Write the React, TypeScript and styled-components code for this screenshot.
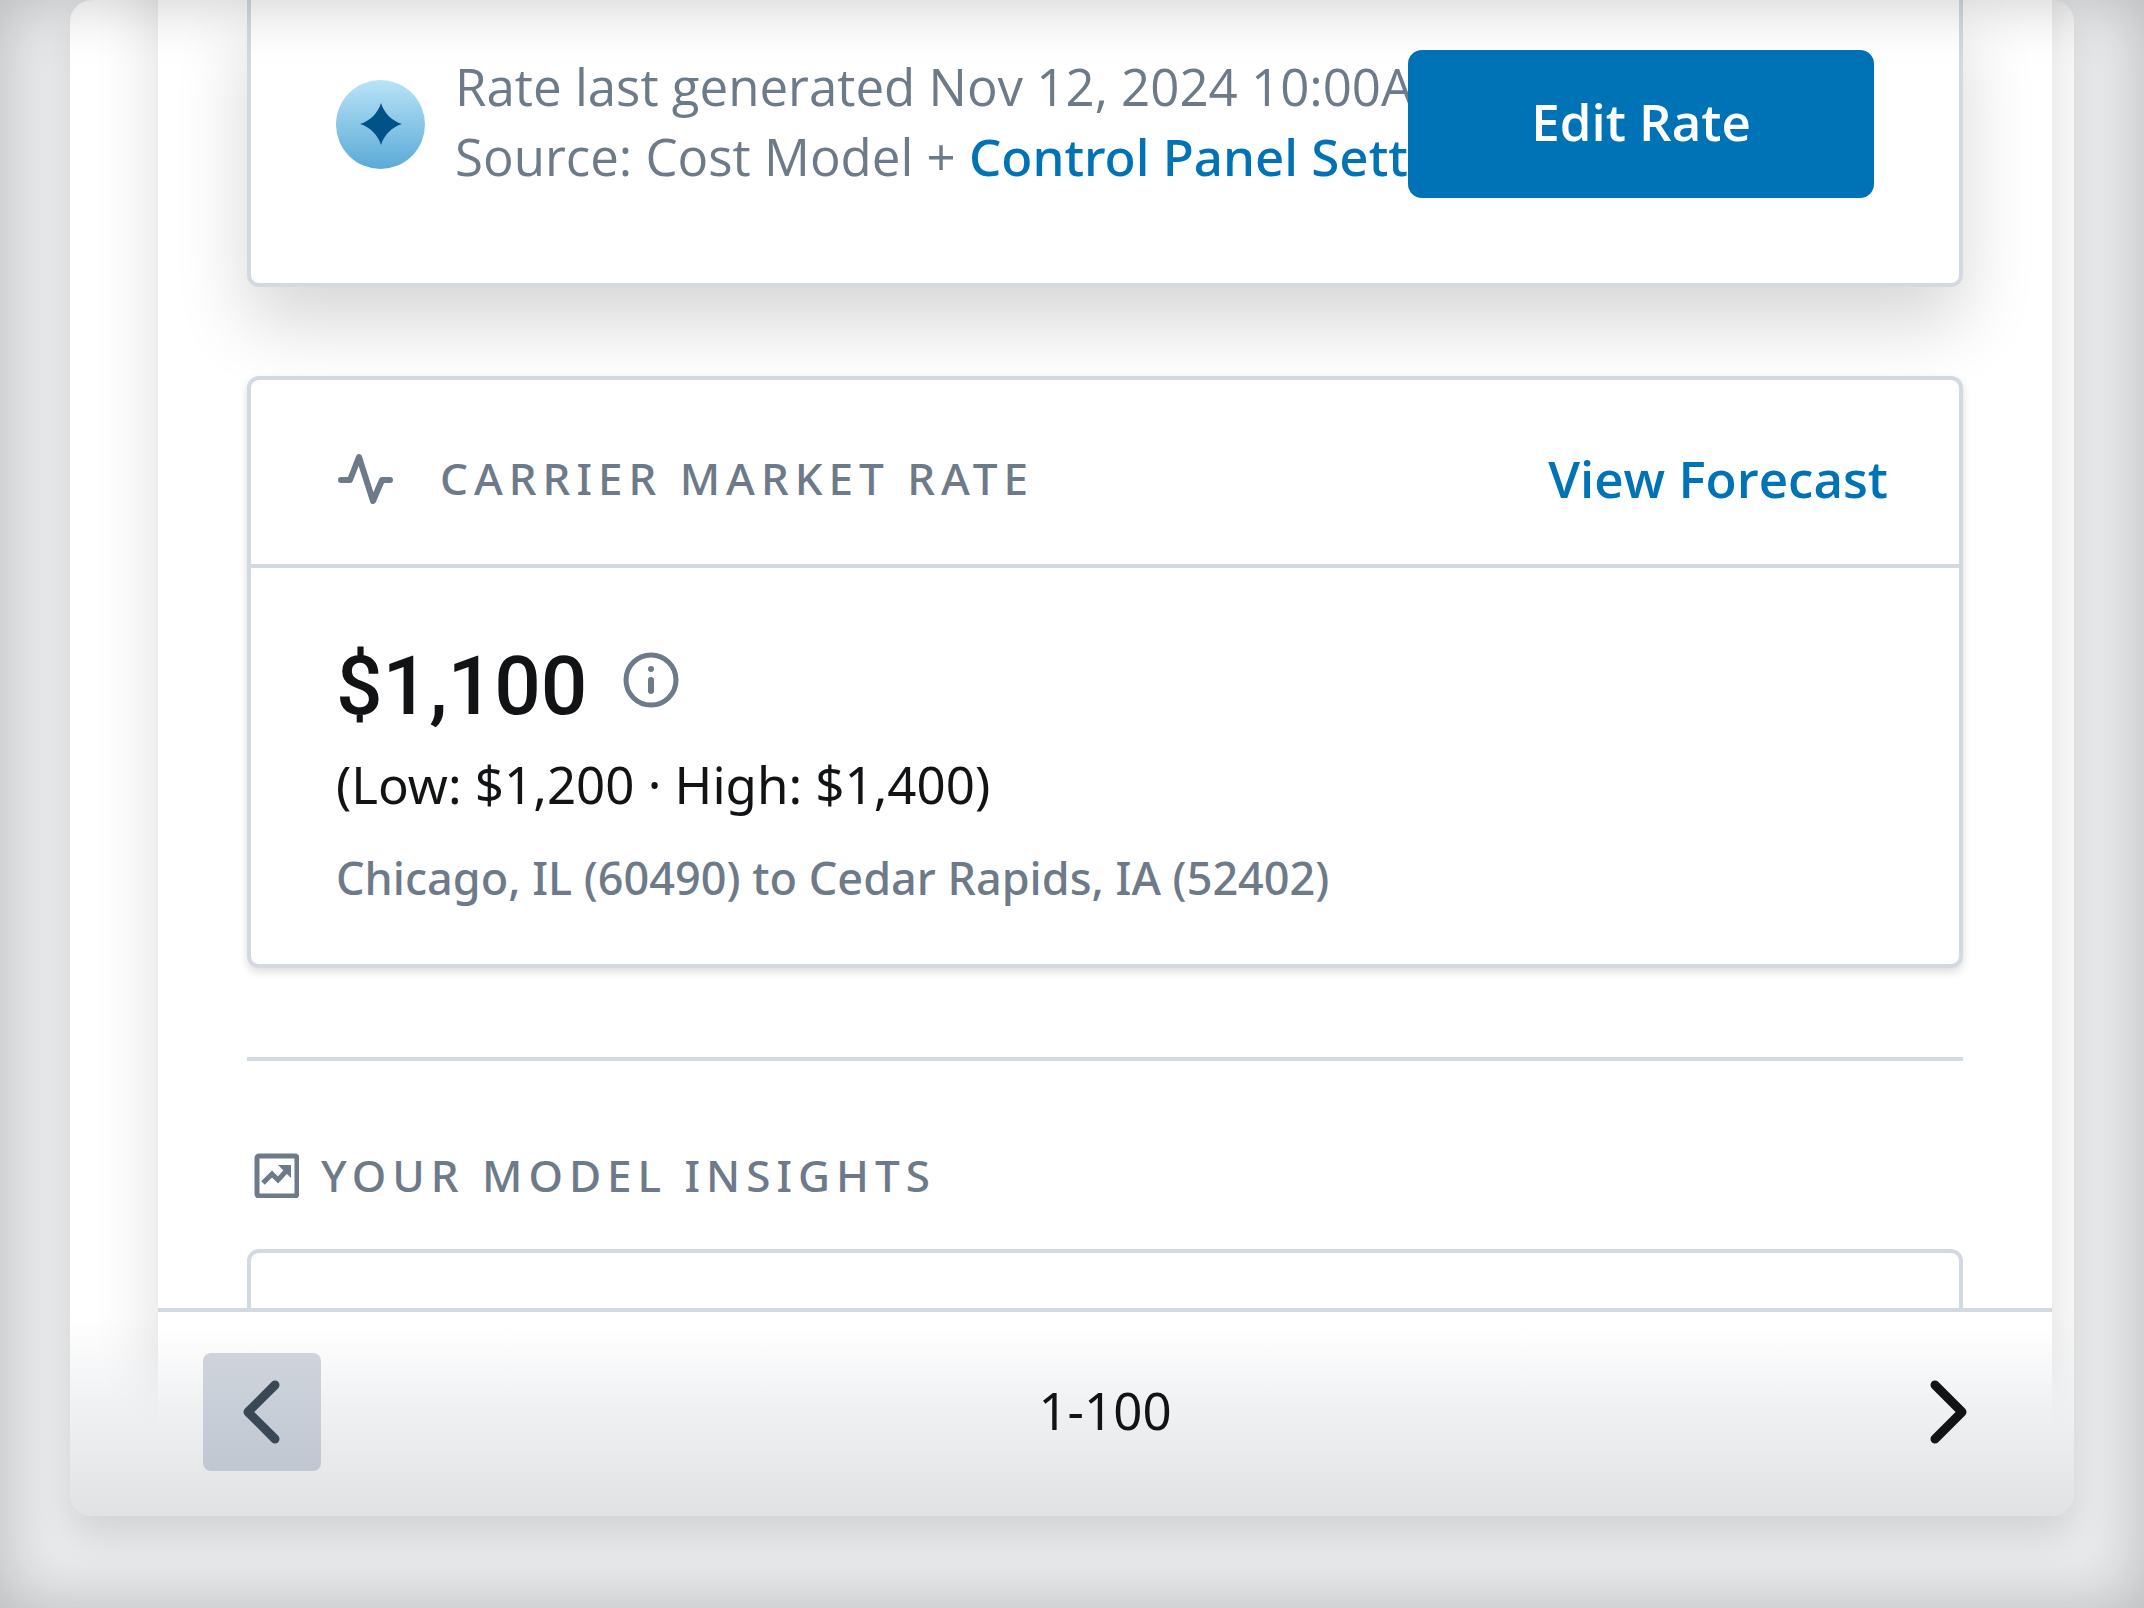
import React from "react";
import styled, { createGlobalStyle } from "styled-components";

const color = {
  line: "#d3d9e1",
  muted: "#6c7a89",
  ink: "#111315",
  blue: "#0072b6",
};

const GlobalStyle = createGlobalStyle`
  * { box-sizing: border-box; }
  body {
    margin: 0;
    font-family: "Open Sans", "Noto Sans", sans-serif;
    color: ${color.ink};
    background: #e9ebed;
  }
  h2, p { margin: 0; }
`;

const Page = styled.div`
  position: relative;
  display: flex;
  height: 100vh;
  padding: 0 70px 92px;
  background: #e9ebed;

  &::after {
    content: "";
    position: absolute;
    inset: 0;
    box-shadow: inset 0 0 64px rgba(0, 0, 0, 0.22);
    pointer-events: none;
  }
`;

const Window = styled.div`
  display: flex;
  flex: 1;
  min-width: 0;
  padding: 0 22px 0 88px;
  overflow: hidden;
  border-radius: 22px;
  background: linear-gradient(to top, #e1e2e4, #f0f1f3 110px, #fff 200px);
`;

const WindowShadow = styled.div`
  display: flex;
  flex: 1;
  min-width: 0;
  border-radius: 22px;
  box-shadow: 0 20px 36px rgba(0, 0, 0, 0.1);
`;

const Panel = styled.main`
  display: flex;
  flex: 1;
  flex-direction: column;
  min-width: 0;
  box-shadow: 0 -140px 60px rgba(0, 0, 0, 0.14);
`;

const Scroll = styled.div`
  flex: 1;
  min-height: 0;
  padding: 0 89px;
  overflow: hidden;
  background: #fff;
`;

const RateCard = styled.section`
  display: flex;
  align-items: center;
  padding: 50px 85px 85px;
  border: 4px solid ${color.line};
  border-top: 0;
  border-radius: 0 0 12px 12px;
  background: #fff;
  box-shadow: 0 36px 72px rgba(0, 0, 0, 0.16);
`;

const SparkBadge = styled.span`
  display: flex;
  flex: none;
  align-items: center;
  justify-content: center;
  width: 89px;
  height: 89px;
  margin-right: 30px;
  border-radius: 50%;
  background: linear-gradient(#b9e3f8, #5aaad6);
`;

const RateNote = styled.p`
  flex: 1;
  width: 0;
  padding-bottom: 6px;
  color: ${color.muted};
  font-size: 51px;
  line-height: 70px;
  white-space: nowrap;
`;

const TextLink = styled.a<{ $strong?: boolean }>`
  color: ${color.blue};
  font-family: ${(p) => (p.$strong ? '"Open Sans"' : '"Noto Sans"')}, sans-serif;
  font-size: 51px;
  font-weight: ${(p) => (p.$strong ? 600 : 500)};
  line-height: 70px;
  text-decoration: none;
`;

const EditButton = styled.button`
  position: relative;
  flex: none;
  width: 466px;
  height: 148px;
  padding: 0 0 6px;
  border: 0;
  border-radius: 14px;
  background: ${color.blue};
  color: #fff;
  font: 600 51px/70px "Open Sans", "Noto Sans", sans-serif;
`;

const MarketCard = styled.section`
  margin-top: 89px;
  border: 4px solid ${color.line};
  border-radius: 12px;
  background: #fff;
  box-shadow: 0 4px 8px rgba(30, 10, 10, 0.14);
`;

const MarketHeader = styled.header`
  display: flex;
  align-items: center;
  height: 188px;
  padding: 12px 71px 0 85px;
  border-bottom: 4px solid ${color.line};
`;

const SectionTitle = styled.h2`
  flex: 1;
  color: ${color.muted};
  font-family: "Noto Sans", sans-serif;
  font-size: 44px;
  font-weight: 500;
  line-height: 60px;
  letter-spacing: 6px;
  white-space: nowrap;
`;

const IconSlot = styled.span<{ $gap: number }>`
  display: flex;
  flex: none;
  margin-right: ${(p) => p.$gap}px;
  color: ${color.muted};
`;

const MarketBody = styled.div`
  padding: 64px 85px 48px;
`;

const PriceRow = styled.div`
  display: flex;
  align-items: flex-start;
  gap: 36px;
  height: 112px;
`;

const Price = styled.strong`
  font: 500 82px/108px Roboto, sans-serif;
`;

const InfoButton = styled.button`
  display: flex;
  padding: 20px 0 0;
  border: 0;
  background: none;
  color: ${color.muted};
`;

const Range = styled.p`
  font-family: "Noto Sans", sans-serif;
  font-size: 51px;
  line-height: 80px;
`;

const Lane = styled.p`
  padding-top: 16px;
  color: ${color.muted};
  font-family: "Noto Sans", sans-serif;
  font-size: 45px;
  font-weight: 500;
  line-height: 76px;
`;

const Divider = styled.hr`
  height: 4px;
  margin: 89px 0 84px;
  border: 0;
  background: ${color.line};
`;

const InsightsHeader = styled.div`
  display: flex;
  align-items: center;
  height: 60px;
  margin-bottom: 44px;
  padding-left: 7px;
`;

const InsightCard = styled.section`
  height: 400px;
  border: 4px solid ${color.line};
  border-radius: 12px;
  background: #fff;
`;

const Pager = styled.nav`
  display: flex;
  flex: none;
  align-items: center;
  justify-content: space-between;
  height: 208px;
  padding: 0 45px 4px;
  border-top: 4px solid ${color.line};
  background: linear-gradient(to top, #e1e2e4, #f0f1f3 110px, #fff 190px);
`;

const PagerButton = styled.button<{ $filled?: boolean }>`
  display: flex;
  align-items: center;
  justify-content: center;
  width: 118px;
  height: 118px;
  padding: 0;
  border: 0;
  border-radius: 8px;
  background: ${(p) => (p.$filled ? "linear-gradient(#cfd4dc, #c0c7d1)" : "none")};
  color: ${(p) => (p.$filled ? "#3a4856" : color.ink)};
`;

const PageRange = styled.span`
  padding-bottom: 4px;
  font-family: "Noto Sans", sans-serif;
  font-size: 51px;
  line-height: 70px;
`;

const Spark = () => (
  <svg width="42" height="42" viewBox="0 0 42 42" aria-hidden="true">
    <path d="M21 0C24 10 32 18 42 21C32 24 24 32 21 42C18 32 10 24 0 21C10 18 18 10 21 0Z" fill="#005389" />
  </svg>
);

const Pulse = () => (
  <svg width="59" height="56" viewBox="0 0 59 56" fill="none" stroke="currentColor" strokeWidth="6" strokeLinecap="round" strokeLinejoin="round" aria-hidden="true">
    <path d="M5 30H14L23 7L37 51L46 30H54" />
  </svg>
);

const TrendBox = () => (
  <svg width="45" height="45" viewBox="0 0 45 45" fill="none" stroke="currentColor" strokeWidth="5" aria-hidden="true">
    <rect x="3" y="3" width="40" height="40" rx="2" />
    <path d="M9 30L18 21L24 27L34 16" strokeWidth="5" />
    <path d="M24 12H37V25Z" fill="currentColor" stroke="none" />
  </svg>
);

const Info = () => (
  <svg width="56" height="56" viewBox="0 0 56 56" fill="none" stroke="currentColor" strokeWidth="5" strokeLinecap="round" aria-hidden="true">
    <circle cx="28" cy="28" r="25" />
    <path d="M28 28V39" strokeWidth="6" />
    <circle cx="28" cy="17" r="3" fill="currentColor" stroke="none" />
  </svg>
);

const Chevron = ({ d }: { d: string }) => (
  <svg width="38" height="64" viewBox="0 0 38 64" fill="none" stroke="currentColor" strokeWidth="9" strokeLinecap="round" strokeLinejoin="round" aria-hidden="true">
    <path d={d} />
  </svg>
);

export default function App() {
  return (
    <>
      <GlobalStyle />
      <Page>
        <WindowShadow>
          <Window>
            <Panel>
              <Scroll>
                <RateCard>
                  <SparkBadge>
                    <Spark />
                  </SparkBadge>
                  <RateNote>
                    Rate last generated Nov 12, 2024 10:00AM
                    <br />
                    Source: Cost Model + <TextLink href="#settings">Control Panel Settings</TextLink>
                  </RateNote>
                  <EditButton type="button">Edit Rate</EditButton>
                </RateCard>

                <MarketCard>
                  <MarketHeader>
                    <IconSlot $gap={45}>
                      <Pulse />
                    </IconSlot>
                    <SectionTitle>CARRIER MARKET RATE</SectionTitle>
                    <TextLink $strong href="#forecast">View Forecast</TextLink>
                  </MarketHeader>
                  <MarketBody>
                    <PriceRow>
                      <Price>$1,100</Price>
                      <InfoButton type="button" aria-label="About this rate">
                        <Info />
                      </InfoButton>
                    </PriceRow>
                    <Range>(Low: $1,200 · High: $1,400)</Range>
                    <Lane>Chicago, IL (60490) to Cedar Rapids, IA (52402)</Lane>
                  </MarketBody>
                </MarketCard>

                <Divider />

                <InsightsHeader>
                  <IconSlot $gap={22}>
                    <TrendBox />
                  </IconSlot>
                  <SectionTitle>YOUR MODEL INSIGHTS</SectionTitle>
                </InsightsHeader>
                <InsightCard />
              </Scroll>

              <Pager aria-label="Results pages">
                <PagerButton $filled type="button" aria-label="Previous page">
                  <Chevron d="M32 5L5 32L32 59" />
                </PagerButton>
                <PageRange>1-100</PageRange>
                <PagerButton type="button" aria-label="Next page">
                  <Chevron d="M6 5L33 32L6 59" />
                </PagerButton>
              </Pager>
            </Panel>
          </Window>
        </WindowShadow>
      </Page>
    </>
  );
}
